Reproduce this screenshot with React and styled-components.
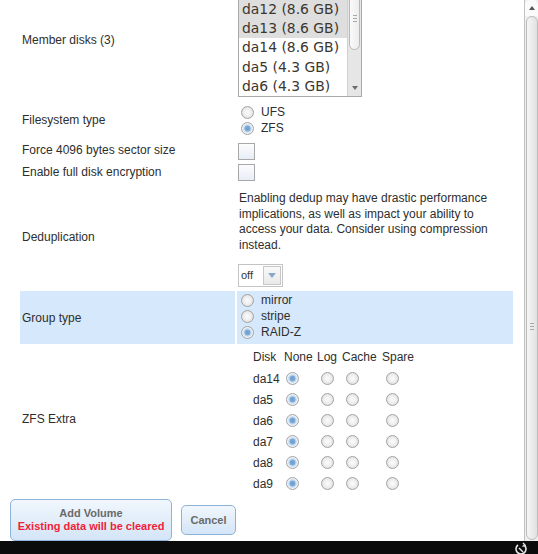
import React from "react";
import styled, { createGlobalStyle } from "styled-components";

const Global = createGlobalStyle`
  html, body { margin: 0; padding: 0; background: #fff; overflow: hidden; }
  body { font-family: "Liberation Sans", Arial, sans-serif; font-size: 12px; color: #2e2e2e; }
`;

const Screen = styled.div`
  width: 538px;
  height: 554px;
  display: flex;
  flex-direction: column;
  overflow: hidden;
`;

const Main = styled.div`
  flex: 1;
  display: flex;
  min-height: 0;
`;

const Viewport = styled.div`
  flex: 1;
  overflow: hidden;
`;

const Content = styled.div`
  margin-top: -21px;
  padding-left: 10px;
`;

const FormGrid = styled.div`
  display: grid;
  grid-template-columns: 215px 276px;
  column-gap: 2px;
  row-gap: 2px;
  margin-left: 10px;
`;

const LabelCell = styled.div`
  display: flex;
  align-items: center;
  padding-left: 2px;
  min-height: ${(p) => p.$h || 0}px;
  background: ${(p) => (p.$hl ? "#d6e8fb" : "transparent")};
`;

const ValueCell = styled.div`
  padding: ${(p) => p.$pad || "0 0 0 1px"};
  height: ${(p) => p.$h || 0}px;
  box-sizing: border-box;
  background: ${(p) => (p.$hl ? "#d6e8fb" : "transparent")};
`;

/* listbox */
const ListBox = styled.div`
  width: 124px;
  height: 118px;
  box-sizing: border-box;
  border: 1px solid #a9a9a9;
  display: flex;
  background: #fff;
`;

const ListItems = styled.div`
  flex: 1;
  display: flex;
  flex-direction: column;
`;

const ListItem = styled.div`
  height: ${(p) => (p.$first ? 20 : 19.2)}px;
  line-height: ${(p) => (p.$first ? 20 : 19.2)}px;
  padding-left: 3px;
  font-family: "DejaVu Sans", "Open Sans", sans-serif;
  font-size: 13.9px;
  color: #3c3630;
  white-space: nowrap;
  background: ${(p) => (p.$sel ? "#dedede" : "#fff")};
`;

const InnerBar = styled.div`
  width: 13px;
  background: #e6e6e6;
  border-left: 1px solid #d0d0d0;
  display: flex;
  flex-direction: column;
  align-items: center;
`;

const InnerThumb = styled.div`
  width: 11px;
  height: 70px;
  box-sizing: border-box;
  border: 1px solid #b8b8b8;
  border-radius: 6px;
  background: linear-gradient(to right, #fafafa, #ededed);
  display: flex;
  align-items: flex-end;
  justify-content: center;
  padding-bottom: 27px;
`;

const Grip = styled.div`
  width: 4px;
  height: 5px;
  border-top: 1px solid #a8a8a8;
  border-bottom: 1px solid #a8a8a8;
  background: linear-gradient(transparent 2px, #a8a8a8 2px, #a8a8a8 3px, transparent 3px);
`;

const InnerSpacer = styled.div`
  flex: 1;
`;

const DownArrow = styled.div`
  width: 0;
  height: 0;
  border-left: 3px solid transparent;
  border-right: 3px solid transparent;
  border-top: 4px solid #6b6b6b;
  margin-bottom: 6px;
`;

/* radios, checkboxes */
const OptionLine = styled.label`
  display: flex;
  align-items: center;
  height: 16px;
  gap: 7px;
  padding-left: 4px;
  font-size: 12px;
  color: #2e2e2e;
`;

const Radio = styled.span`
  display: inline-block;
  width: 13px;
  height: 13px;
  box-sizing: border-box;
  border-radius: 50%;
  border: 1px solid #a3a3a3;
  flex-shrink: 0;
  background: ${(p) =>
    p.$on
      ? "radial-gradient(circle, #6e9fcf 0, #7eaad6 2.6px, #b9d3ec 3.2px, #e2edf7 4.6px, #f4f4f4 5.4px)"
      : "radial-gradient(circle, #fbfbfb 0, #f1f1f1 3px, #e4e4e4 5.5px)"};
`;

const Checkbox = styled.span`
  display: block;
  width: 17px;
  height: 17px;
  box-sizing: border-box;
  border: 1px solid #a8a8a8;
  background: linear-gradient(#fbfcfe, #e8eef6);
`;

const DedupText = styled.div`
  width: 270px;
  line-height: 15.7px;
  padding-left: 1px;
  margin-top: 7px;
  color: #2e2e2e;
`;

const Select = styled.div`
  margin-top: 10px;
  display: flex;
  width: 45px;
  height: 23px;
  box-sizing: border-box;
  border: 1px solid #c4c4c4;
  background: #fff;
`;

const SelectValue = styled.div`
  width: 21px;
  font-size: 11px;
  line-height: 21px;
  padding-left: 2px;
  color: #333;
`;

const SelectButton = styled.div`
  flex: 1;
  border: 1px solid #c8c8c8;
  margin: 1px;
  background: linear-gradient(#f9f9f9, #e9e9e9);
  display: flex;
  align-items: center;
  justify-content: center;
`;

const BlueTri = styled.div`
  width: 0;
  height: 0;
  border-left: 4px solid transparent;
  border-right: 4px solid transparent;
  border-top: 5px solid #8aa9cc;
`;

/* ZFS extra table */
const ExtraGrid = styled.div`
  display: grid;
  grid-template-columns: 31px 33px 25px 40px 34px;
  grid-auto-rows: 21px;
  margin-left: 15px;
  margin-top: 1px;
`;

const HeadCell = styled.div`
  display: flex;
  align-items: center;
  height: 20px;
  color: #2e2e2e;
  white-space: nowrap;
`;

const DiskCell = styled.div`
  display: flex;
  align-items: center;
  color: #2e2e2e;
`;

const RadioCell = styled.div`
  display: flex;
  align-items: center;
  padding-left: ${(p) => p.$ml}px;
`;

/* buttons */
const ButtonRow = styled.div`
  display: flex;
  align-items: center;
  gap: 9px;
  margin-top: 7px;
`;

const Button = styled.button`
  font-family: "Liberation Sans", Arial, sans-serif;
  font-weight: bold;
  font-size: 11px;
  border: 1px solid #8fb3d8;
  border-radius: 5px;
  background: linear-gradient(#f1f7fd, #d3e5f7);
  color: #6a6a6a;
  width: ${(p) => p.$w}px;
  height: ${(p) => p.$h}px;
  padding: 0;
  display: flex;
  flex-direction: column;
  align-items: center;
  justify-content: center;
  line-height: 13px;
`;

const Warn = styled.span`
  color: #f21d38;
`;

/* page scrollbar */
const PageBar = styled.div`
  width: 13px;
  border-left: 1px solid #c2c2c2;
  background: #efefef;
  display: flex;
  flex-direction: column;
  align-items: center;
`;

const UpButton = styled.div`
  width: 13px;
  height: 16px;
  display: flex;
  align-items: center;
  justify-content: center;
  background: #fafafa;
  border-radius: 5px 5px 0 0;
`;

const UpTri = styled.div`
  width: 0;
  height: 0;
  border-left: 3px solid transparent;
  border-right: 3px solid transparent;
  border-bottom: 4px solid #555;
`;

const PageThumb = styled.div`
  flex: 1;
  width: 12px;
  box-sizing: border-box;
  margin-bottom: 1px;
  border: 1px solid #bcbcbc;
  border-radius: 6px;
  background: linear-gradient(to right, #f6f6f6, #e1e1e1);
  display: flex;
  justify-content: center;
  padding-top: 306px;
`;

const Taskbar = styled.div`
  height: 13px;
  background: #0b0b0b;
  display: flex;
  justify-content: flex-end;
  padding-right: 10px;
  overflow: hidden;
`;

const disks = [
  ["", true],
  ["da12 (8.6 GB)", true],
  ["da13 (8.6 GB)", true],
  ["da14 (8.6 GB)", false],
  ["da5 (4.3 GB)", false],
  ["da6 (4.3 GB)", false],
];

const extra = ["da14", "da5", "da6", "da7", "da8", "da9"];

export default function App() {
  return (
    <Screen>
      <Global />
      <Main>
        <Viewport>
          <Content>
            <FormGrid>
              <LabelCell $h={122}>Member disks (3)</LabelCell>
              <ValueCell $h={122}>
                <ListBox>
                  <ListItems>
                    {disks.map(([d, s], i) => (
                      <ListItem key={i} $sel={s} $first={i === 0}>
                        {d}
                      </ListItem>
                    ))}
                  </ListItems>
                  <InnerBar>
                    <InnerThumb>
                      <Grip />
                    </InnerThumb>
                    <InnerSpacer />
                    <DownArrow />
                  </InnerBar>
                </ListBox>
              </ValueCell>

              <LabelCell $h={34}>Filesystem type</LabelCell>
              <ValueCell $h={34} $pad="1px 0 0 0">
                <OptionLine>
                  <Radio />
                  UFS
                </OptionLine>
                <OptionLine>
                  <Radio $on />
                  ZFS
                </OptionLine>
              </ValueCell>

              <LabelCell $h={21}>Force 4096 bytes sector size</LabelCell>
              <ValueCell $h={21} $pad="4px 0 0 1px">
                <Checkbox />
              </ValueCell>

              <LabelCell $h={20}>Enable full disk encryption</LabelCell>
              <ValueCell $h={20} $pad="2px 0 0 1px">
                <Checkbox />
              </ValueCell>

              <LabelCell $h={105}>Deduplication</LabelCell>
              <ValueCell $h={105} $pad="0 0 0 1px">
                <DedupText>
                  Enabling dedup may have drastic performance implications, as well as impact
                  your ability to access your data. Consider using compression instead.
                </DedupText>
                <Select>
                  <SelectValue>off</SelectValue>
                  <SelectButton>
                    <BlueTri />
                  </SelectButton>
                </Select>
              </ValueCell>

              <LabelCell $h={53} $hl>
                Group type
              </LabelCell>
              <ValueCell $h={53} $hl $pad="1px 0 0 0">
                <OptionLine>
                  <Radio />
                  mirror
                </OptionLine>
                <OptionLine>
                  <Radio />
                  stripe
                </OptionLine>
                <OptionLine>
                  <Radio $on />
                  RAID-Z
                </OptionLine>
              </ValueCell>

              <LabelCell $h={146}>ZFS Extra</LabelCell>
              <ValueCell $h={146}>
                <ExtraGrid>
                  <HeadCell>Disk</HeadCell>
                  <HeadCell>None</HeadCell>
                  <HeadCell>Log</HeadCell>
                  <HeadCell>Cache</HeadCell>
                  <HeadCell>Spare</HeadCell>
                  {extra.map((d) => (
                    <React.Fragment key={d}>
                      <DiskCell>{d}</DiskCell>
                      <RadioCell $ml={2}>
                        <Radio $on />
                      </RadioCell>
                      <RadioCell $ml={4}>
                        <Radio />
                      </RadioCell>
                      <RadioCell $ml={4}>
                        <Radio />
                      </RadioCell>
                      <RadioCell $ml={4}>
                        <Radio />
                      </RadioCell>
                    </React.Fragment>
                  ))}
                </ExtraGrid>
              </ValueCell>
            </FormGrid>
            <ButtonRow>
              <Button $w={162} $h={42}>
                <span>Add Volume</span>
                <Warn>Existing data will be cleared</Warn>
              </Button>
              <Button $w={55} $h={30}>
                Cancel
              </Button>
            </ButtonRow>
          </Content>
        </Viewport>
        <PageBar>
          <UpButton>
            <UpTri />
          </UpButton>
          <PageThumb>
            <Grip />
          </PageThumb>
        </PageBar>
      </Main>
      <Taskbar>
        <svg width="14" height="14" viewBox="0 0 14 14" style={{ marginTop: 1 }}>
          <path d="M4 3 A5 5 0 1 0 10 3" fill="none" stroke="#e8e8e8" strokeWidth="1.6" />
          <path d="M9 1 L11 3 L8.5 4.5" fill="none" stroke="#e8e8e8" strokeWidth="1.4" />
          <path d="M5 6 L9 10" stroke="#e8e8e8" strokeWidth="1.4" />
        </svg>
      </Taskbar>
    </Screen>
  );
}
